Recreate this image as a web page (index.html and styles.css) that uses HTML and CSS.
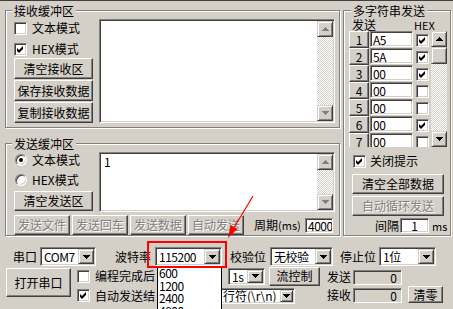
FILE: index.html
```html
<!DOCTYPE html>
<html lang="zh-CN">
<head>
  <meta charset="UTF-8" />
  <meta name="viewport" content="width=device-width, initial-scale=1.0"/>
  <title>串口调试助手</title>
  <link rel="stylesheet" href="styles.css">
</head>
<body>
<div class="win">

  <div class="top">
    <div class="leftcol">

      <!-- 接收缓冲区 -->
      <div class="grp recv">
        <div class="grp-title">接收缓冲区</div>
        <div class="grp-body">
          <div class="ctrls">
            <label class="chk"><span class="box"></span>文本模式</label>
            <label class="chk"><span class="box"><svg class="tick" width="9" height="9" viewBox="0 0 9 9"><path d="M1 3L3 5L7 1L7 4L3 8L1 6Z"/></svg></span>HEX模式</label>
            <button class="btn">清空接收区</button>
            <button class="btn">保存接收数据</button>
            <button class="btn">复制接收数据</button>
          </div>
          <div class="memo">
            <div class="memo-text"></div>
            <div class="vscroll">
              <span class="sb-btn"><svg width="7" height="4" viewBox="0 0 7 4" class="dim"><path d="M3 0h1v1h1v1h1v1h1v1h-7v-1h1v-1h1v-1h1z"/></svg></span>
              <span class="sb-track"></span>
              <span class="sb-btn"><svg width="7" height="4" viewBox="0 0 7 4" class="dim"><path d="M0 0h7v1h-1v1h-1v1h-1v1h-1v-1h-1v-1h-1v-1h-1z"/></svg></span>
            </div>
          </div>
        </div>
      </div>

      <!-- 发送缓冲区 -->
      <div class="grp send">
        <div class="grp-title">发送缓冲区</div>
        <div class="grp-body">
          <div class="send-main">
            <div class="ctrls">
              <label class="rad"><span class="dot on"></span>文本模式</label>
              <label class="rad"><span class="dot"></span>HEX模式</label>
              <button class="btn">清空发送区</button>
            </div>
            <div class="memo">
              <div class="memo-text">1</div>
              <div class="vscroll">
                <span class="sb-btn"><svg width="7" height="4" viewBox="0 0 7 4" class="dim"><path d="M3 0h1v1h1v1h1v1h1v1h-7v-1h1v-1h1v-1h1z"/></svg></span>
                <span class="sb-track"></span>
                <span class="sb-btn"><svg width="7" height="4" viewBox="0 0 7 4" class="dim"><path d="M0 0h7v1h-1v1h-1v1h-1v1h-1v-1h-1v-1h-1v-1h-1z"/></svg></span>
              </div>
            </div>
          </div>
          <div class="sendbar">
            <button class="btn off">发送文件</button>
            <button class="btn off">发送回车</button>
            <button class="btn off">发送数据</button>
            <button class="btn off">自动发送</button>
            <span class="period">周期<small>(ms)</small></span>
            <span class="field period-in">4000</span>
          </div>
        </div>
      </div>
    </div>

    <!-- 多字符串发送 -->
    <div class="grp multi">
      <div class="grp-title">多字符串发送</div>
      <div class="grp-body">
        <div class="mhead"><span class="mh-send">发送</span><span class="mh-hex">HEX</span></div>
        <div class="mpanel">
          <div class="mlist">
            <div class="mrow"><button class="btn num">1</button><span class="field mi">A5</span><span class="box"><svg class="tick" width="9" height="9" viewBox="0 0 9 9"><path d="M1 3L3 5L7 1L7 4L3 8L1 6Z"/></svg></span></div>
            <div class="mrow"><button class="btn num">2</button><span class="field mi">5A</span><span class="box"><svg class="tick" width="9" height="9" viewBox="0 0 9 9"><path d="M1 3L3 5L7 1L7 4L3 8L1 6Z"/></svg></span></div>
            <div class="mrow"><button class="btn num">3</button><span class="field mi">00</span><span class="box"><svg class="tick" width="9" height="9" viewBox="0 0 9 9"><path d="M1 3L3 5L7 1L7 4L3 8L1 6Z"/></svg></span></div>
            <div class="mrow"><button class="btn num">4</button><span class="field mi">00</span><span class="box"></span></div>
            <div class="mrow"><button class="btn num">5</button><span class="field mi">00</span><span class="box"></span></div>
            <div class="mrow"><button class="btn num">6</button><span class="field mi">00</span><span class="box"><svg class="tick" width="9" height="9" viewBox="0 0 9 9"><path d="M1 3L3 5L7 1L7 4L3 8L1 6Z"/></svg></span></div>
            <div class="mrow"><button class="btn num">7</button><span class="field mi">00</span><span class="box"></span></div>
          </div>
          <div class="vscroll">
            <span class="sb-btn"><svg width="7" height="4" viewBox="0 0 7 4"><path d="M3 0h1v1h1v1h1v1h1v1h-7v-1h1v-1h1v-1h1z"/></svg></span>
            <span class="sb-thumb"></span>
            <span class="sb-track"></span>
            <span class="sb-btn"><svg width="7" height="4" viewBox="0 0 7 4"><path d="M0 0h7v1h-1v1h-1v1h-1v1h-1v-1h-1v-1h-1v-1h-1z"/></svg></span>
          </div>
        </div>
        <label class="chk close-tip"><span class="box"><svg class="tick" width="9" height="9" viewBox="0 0 9 9"><path d="M1 3L3 5L7 1L7 4L3 8L1 6Z"/></svg></span>关闭提示</label>
        <button class="btn mbtn">清空全部数据</button>
        <button class="btn mbtn off">自动循环发送</button>
        <div class="interval"><span class="iv-lbl">间隔</span><span class="field iv-in">1</span><span class="iv-ms">ms</span></div>
      </div>
    </div>
  </div>

  <!-- 串口设置 -->
  <div class="rowa">
    <span class="lbl">串口</span>
    <span class="combo c-port"><span class="combo-text">COM7</span><span class="combo-btn"><svg width="7" height="4" viewBox="0 0 7 4"><path d="M0 0h7v1h-1v1h-1v1h-1v1h-1v-1h-1v-1h-1v-1h-1z"/></svg></span></span>
    <span class="lbl l-baud">波特率</span>
    <span class="combo c-baud"><span class="combo-text">115200</span><span class="combo-btn"><svg width="7" height="4" viewBox="0 0 7 4"><path d="M0 0h7v1h-1v1h-1v1h-1v1h-1v-1h-1v-1h-1v-1h-1z"/></svg></span></span>
    <span class="lbl l-par">校验位</span>
    <span class="combo c-par"><span class="combo-text">无校验</span><span class="combo-btn"><svg width="7" height="4" viewBox="0 0 7 4"><path d="M0 0h7v1h-1v1h-1v1h-1v1h-1v-1h-1v-1h-1v-1h-1z"/></svg></span></span>
    <span class="lbl l-stop">停止位</span>
    <span class="combo c-stop"><span class="combo-text">1位</span><span class="combo-btn"><svg width="7" height="4" viewBox="0 0 7 4"><path d="M0 0h7v1h-1v1h-1v1h-1v1h-1v-1h-1v-1h-1v-1h-1z"/></svg></span></span>
  </div>

  <div class="rowbc">
    <button class="btn open">打开串口</button>
    <div class="mid">
      <div class="mid-row r1">
        <label class="chk cut"><span class="box"></span>编程完成后</label>
        <span class="combo c-delay"><span class="combo-text">1s</span><span class="combo-btn"><svg width="7" height="4" viewBox="0 0 7 4"><path d="M0 0h7v1h-1v1h-1v1h-1v1h-1v-1h-1v-1h-1v-1h-1z"/></svg></span></span>
        <button class="btn flow">流控制</button>
      </div>
      <div class="mid-row r2">
        <label class="chk cut"><span class="box"><svg class="tick" width="9" height="9" viewBox="0 0 9 9"><path d="M1 3L3 5L7 1L7 4L3 8L1 6Z"/></svg></span>自动发送结</label>
        <span class="combo c-eol"><span class="combo-text">行符(\r\n)</span><span class="combo-btn"><svg width="7" height="4" viewBox="0 0 7 4"><path d="M0 0h7v1h-1v1h-1v1h-1v1h-1v-1h-1v-1h-1v-1h-1z"/></svg></span></span>
      </div>
    </div>
    <div class="stats">
      <span class="lbl">发送</span><span class="field cnt">0</span>
      <span class="lbl">接收</span><span class="field cnt">0</span>
    </div>
    <button class="btn clear">清零</button>
  </div>

  <!-- 展开的波特率列表 -->
  <ul class="droplist">
    <li>600</li>
    <li>1200</li>
    <li>2400</li>
    <li>4800</li>
  </ul>

  <!-- 标注 -->
  <div class="mark"></div>
  <svg class="arrow" width="453" height="309" viewBox="0 0 453 309">
    <line x1="253" y1="195" x2="232" y2="230" stroke="#f00" stroke-width="1.2"/>
    <polygon points="228,237 237.5,228 230.5,224" fill="#f00"/>
  </svg>

</div>
</body>
</html>
```

FILE: styles.css
```css
* { box-sizing: border-box; }
body { margin: 0; background: #d4d0c8; color: #000; font: 12px/14px "Noto Sans CJK SC", "Liberation Sans", sans-serif; }
button { font: inherit; color: inherit; padding: 0; }

.win { position: relative; width: 453px; height: 309px; overflow: hidden; background: #d4d0c8; border-top: 1px solid #404040; }

/* raised / sunken */
.btn { background: #d4d0c8; border: 1px solid; border-color: #fff #404040 #404040 #fff; box-shadow: inset -1px -1px #808080; display: flex; align-items: center; justify-content: center; white-space: nowrap; }
.btn.off { color: #808080; text-shadow: 1px 1px #fff; }
.field, .memo, .combo, .box { background: #fff; border: 1px solid; border-color: #808080 #fff #fff #808080; box-shadow: inset 1px 1px #404040, inset -1px -1px #d4d0c8; }

/* group boxes */
.grp { border: 1px solid #808080; box-shadow: inset 1px 1px #fff, 1px 1px #fff; }
.grp-title { display: table; margin: -8px 0 0 6px; padding: 0 2px; line-height: 15px; background: #d4d0c8; white-space: nowrap; }
.top { display: flex; gap: 3px; margin: 9px 0 0 5px; }
.leftcol { width: 335px; display: flex; flex-direction: column; }

.recv .grp-body { display: flex; gap: 6px; margin-top: 1px; padding: 0 4px 4px 8px; }
.ctrls { width: 79px; display: flex; flex-direction: column; }
.memo { flex: 1; display: flex; padding: 1px; }
.recv .memo { height: 104px; }
.memo-text { flex: 1; padding: 1px 3px; line-height: 14px; }

.chk, .rad { display: flex; align-items: center; white-space: nowrap; }
.box { width: 13px; height: 13px; flex: none; margin-right: 5px; display: flex; align-items: center; justify-content: center; }
.tick { display: block; }
.recv .chk { height: 18px; }
.recv .chk + .chk { margin-top: 3px; }
.recv .btn { height: 21px; }
.recv .btn + .btn { margin-top: 1px; }

.send { margin-top: 15px; }
.send .grp-body { margin-top: 1px; padding: 0 4px 0 8px; }
.send-main { display: flex; gap: 6px; }
.send .memo { height: 60px; }
.rad { height: 16px; }
.rad + .rad { margin-top: 4px; }
.dot { width: 12px; height: 12px; margin: 0 5px 0 1px; border-radius: 50%; background: #fff; border: 1px solid; border-color: #808080 #fff #fff #808080; box-shadow: inset 1px 1px #404040, inset -1px -1px #d4d0c8; display: flex; align-items: center; justify-content: center; }
.dot.on::after { content: ""; width: 4px; height: 4px; border-radius: 50%; background: #000; }
.send .ctrls .btn { height: 20px; margin-top: 3px; }
.sendbar { display: flex; align-items: center; gap: 2px; height: 20px; margin-top: 3px; }
.sendbar .btn { width: 56px; height: 20px; }
.period { margin-left: 8px; width: 49px; white-space: nowrap; }
.period small { font-size: 11px; }
.period-in { width: 28px; height: 15px; line-height: 11px; padding: 1px 0 0 2px; overflow: hidden; white-space: nowrap; letter-spacing: -0.5px; }

/* scrollbars */
.vscroll { width: 16px; display: flex; flex-direction: column; }
.sb-btn, .sb-thumb { height: 16px; flex: none; background: #d4d0c8; border: 1px solid; border-color: #d4d0c8 #404040 #404040 #d4d0c8; box-shadow: inset 1px 1px #fff, inset -1px -1px #808080; display: flex; align-items: center; justify-content: center; }
.sb-btn svg { display: block; fill: #000; }
.sb-btn svg.dim { fill: #808080; }
.sb-thumb { height: 17px; }
.sb-track { flex: 1; background: repeating-conic-gradient(#fff 0 25%, #d4d0c8 0 50%) 0 0 / 2px 2px; }

/* multi string */
.multi { width: 108px; }
.multi .grp-body { margin-top: 1px; padding: 0 3px 0 5px; }
.multi .grp-title { margin-left: 7px; }
.mhead { display: flex; height: 12px; line-height: 12px; }
.mh-send { margin-left: 3px; width: 62px; }
.mh-hex { font-size: 11px; }
.mpanel { display: flex; gap: 2px; height: 116px; }
.mlist { width: 80px; overflow: hidden; }
.mrow { display: flex; align-items: flex-start; height: 17px; }
.num { width: 20px; height: 17px; flex: none; }
.mi { width: 43px; height: 16px; margin-left: 1px; padding: 1px 0 0 2px; line-height: 13px; letter-spacing: -0.5px; }
.mrow .box { margin: 3px 0 0 3px; }
.close-tip { height: 22px; margin: 3px 0 0 4px; }
.close-tip .box { margin-right: 4px; }
.mbtn { width: 92px; height: 20px; margin: 2px 0 0 3px; }
.interval { display: flex; align-items: center; height: 15px; margin-top: 2px; white-space: nowrap; }
.iv-lbl { margin-left: 26px; width: 24px; flex: none; }
.iv-in { width: 29px; height: 15px; margin-left: 1px; line-height: 13px; text-align: center; flex: none; }
.iv-ms { margin-left: 3px; font-size: 11px; }

/* bottom */
.rowa { display: flex; align-items: center; height: 19px; margin: 11px 0 0 13px; }
.lbl { white-space: nowrap; }
.combo { display: flex; height: 19px; padding: 1px; }
.combo-text { flex: 1; padding-left: 2px; line-height: 15px; white-space: nowrap; overflow: hidden; letter-spacing: -0.5px; }
.combo-btn { width: 16px; flex: none; background: #d4d0c8; border: 1px solid; border-color: #d4d0c8 #404040 #404040 #d4d0c8; box-shadow: inset 1px 1px #fff, inset -1px -1px #808080; display: flex; align-items: center; justify-content: center; }
.combo-btn svg { display: block; }
.c-port { width: 56px; margin-left: 3px; }
.l-baud { margin-left: 19px; }
.c-baud { width: 67px; margin-left: 4px; }
.l-par { margin-left: 8px; }
.c-par { width: 63px; margin-left: 4px; }
.l-stop { margin-left: 7px; }
.c-stop { width: 57px; margin-left: 3px; }

.rowbc { display: flex; height: 43px; }
.open { width: 65px; height: 29px; margin: 2px 0 0 6px; }
.mid { width: 243px; margin-left: 6px; }
.mid-row { display: flex; align-items: center; }
.mid-row.r1 { height: 20px; }
.mid-row.r2 { height: 17px; margin-top: 1px; }
.cut { width: 80px; overflow: hidden; }
.r1 .cut { margin-right: 71px; }
.r2 .cut { margin-right: 61px; }
.c-delay { width: 37px; height: 17px; }
.c-delay .combo-text { line-height: 13px; }
.flow { width: 51px; height: 19px; margin-left: 4px; }
.c-eol { width: 77px; height: 16px; }
.c-eol .combo-text { line-height: 12px; padding-left: 3px; letter-spacing: 0; }
.c-eol .combo-btn { width: 13px; }
.stats { display: grid; grid-template-columns: 24px 49px; column-gap: 2px; row-gap: 3px; margin: 4px 0 0 7px; align-content: start; }
.cnt { height: 15px; line-height: 13px; text-align: right; padding-right: 4px; background: #d4d0c8; }
.clear { width: 35px; height: 17px; margin: 20px 0 0 6px; }

/* overlays */
.droplist { position: absolute; left: 157px; top: 266px; width: 65px; height: 50px; margin: 0; padding: 0 0 0 1px; list-style: none; background: #fff; border-left: 1px solid #000; border-right: 1px solid #000; letter-spacing: -0.5px; }
.droplist li { line-height: 12.5px; }
.mark { position: absolute; left: 147px; top: 240px; width: 80px; height: 27px; border: 2px solid #f00; }
.arrow { position: absolute; left: 0; top: 0; pointer-events: none; }
```
